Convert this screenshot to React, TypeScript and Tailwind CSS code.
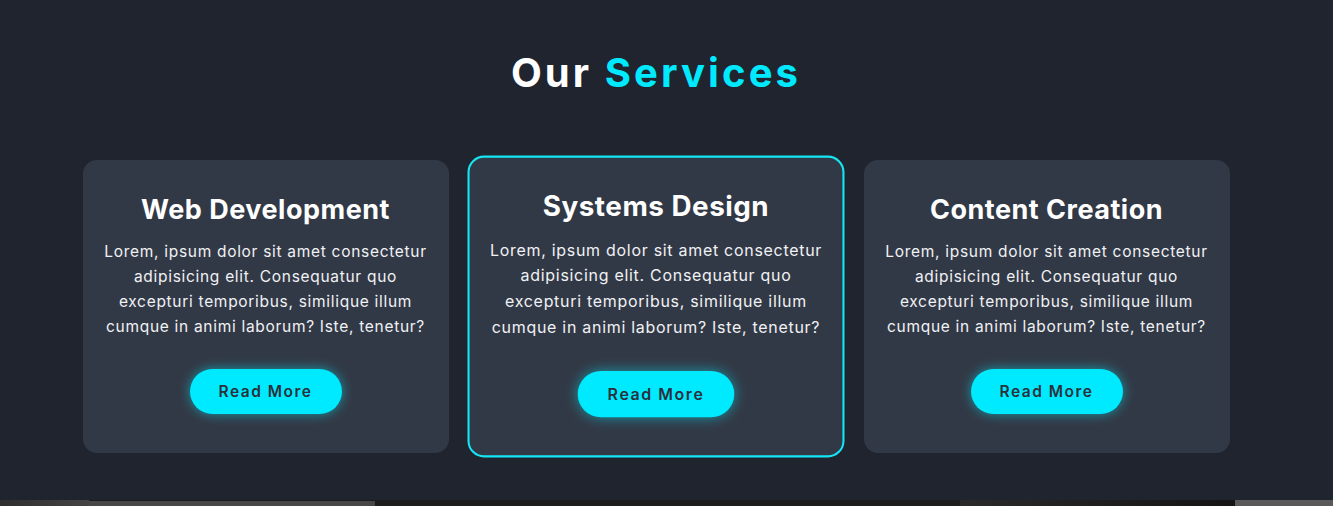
import React from "react";

const lines = [
  "Lorem, ipsum dolor sit amet consectetur",
  "adipisicing elit. Consequatur quo",
  "excepturi temporibus, similique illum",
  "cumque in animi laborum? Iste, tenetur?",
];

function Card({ title, featured }: { title: string; featured?: boolean }) {
  return (
    <div
      className={
        "w-[366px] h-[293px] shrink-0 rounded-[14px] bg-[#323946] flex flex-col items-center " +
        (featured ? "border-2 border-[#14e6f5] scale-[1.03] rounded-[16px] pt-[32px]" : "pt-[34px]")
      }
    >
      <h3 className="text-[27px] leading-[32px] font-bold text-white tracking-[0.5px]">{title}</h3>
      <p className="mt-[13px] text-[15.5px] leading-[25px] text-[#f0f1f4] text-center tracking-[0.7px]">
        {lines.map((l, i) => (
          <React.Fragment key={i}>
            {l}
            {i < lines.length - 1 && <br />}
          </React.Fragment>
        ))}
      </p>
      <button className="mt-[30px] w-[152px] h-[45px] rounded-full bg-[#00eaff] text-[#2a303b] text-[15.5px] font-semibold tracking-[1.5px] shadow-[0_0_12px_rgba(0,234,255,0.55)]">
        Read More
      </button>
    </div>
  );
}

export default function App() {
  return (
    <div className="w-[1333px] h-[506px] overflow-hidden bg-[#20242e] flex flex-col" style={{ fontFamily: "Inter, 'Noto Sans', sans-serif" }}>
      <div className="h-[500px] w-[1312px] flex flex-col items-center">
        <h2 className="mt-[43px] text-[40px] leading-[60px] font-bold text-white tracking-[3.1px]">
          Our <span className="text-[#00eaff]">Services</span>
        </h2>
        <div className="mt-[57px] flex gap-[24.5px]">
          <Card title="Web Development" />
          <Card title="Systems Design" featured />
          <Card title="Content Creation" />
        </div>
      </div>
      <div className="h-[6px] flex w-full">
        <div className="w-[89px] bg-gradient-to-r from-[#2e2e2e] to-[#444]" />
        <div className="w-[286px] bg-[#474747] border-t border-[#1a1a1a]" />
        <div className="w-[585px] bg-[#1c1c1c]" />
        <div className="w-[275px] bg-gradient-to-r from-[#2a2a2a] to-[#141414]" />
        <div className="flex-1 bg-[#5a5a5a]" />
      </div>
    </div>
  );
}
